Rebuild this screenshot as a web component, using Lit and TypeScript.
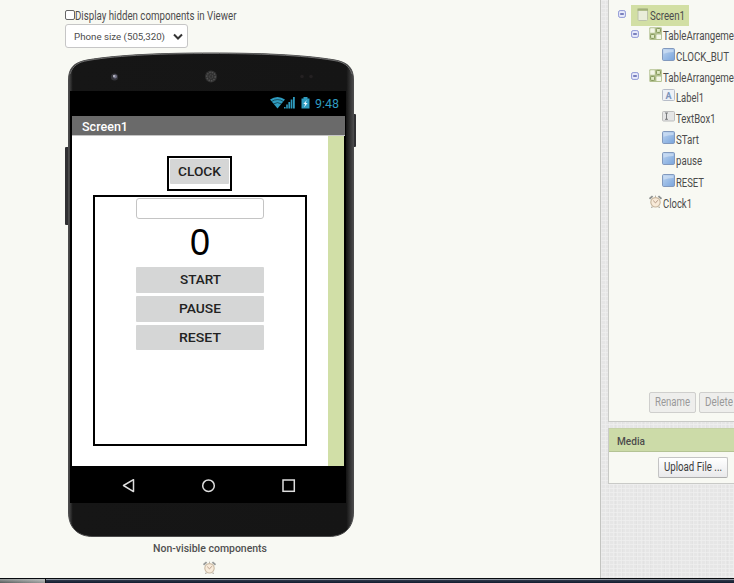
import { LitElement, html, svg, css } from "lit";
import { customElement } from "lit/decorators.js";

// One line of text fitted to a given width (condensed labels).
const line = (text: string, width: number, size: number, height: number, base: number, cls = "") => html`
  <svg class="line ${cls}" width=${width} height=${height}>
    <text x="0" y=${base} font-size=${size} textLength=${width} lengthAdjust="spacingAndGlyphs">${text}</text>
  </svg>`;

const clockArt = svg`
  <path d="M3.4 11.6L2.4 12.8M9.6 11.6L10.6 12.8" stroke="#a9a49c" stroke-width="1.2"/>
  <path d="M.5 3.8L3.6 1.1M12.5 3.8L9.4 1.1" stroke="#8f9290" stroke-width="1.9"/>
  <path d="M6.5 .6v2" stroke="#b5b0a5"/>
  <circle cx="6.5" cy="7.3" r="4.7" fill="#f8ead8" stroke="#c6b49b" stroke-width="1.1"/>
  <path d="M4.2 5.6L6.5 7.9L8.9 5.2" stroke="#b59a86" stroke-width="1" fill="none"/>`;

const art: Record<string, unknown> = {
  screen: svg`<rect x="2" y="1" width="9.5" height="11.500" rx="1" fill="#e9edda" stroke="#bcc2ab"/>
    <rect x="1.5" y=".5" width="10.5" height="2.300" fill="#a1b078"/>`,
  table: svg`<rect x=".3" y=".3" width="12.6" height="12.6" rx="1" fill="#b3c190"/>
    <rect x="1.2" y="1.2" width="4.600" height="4.600" rx=".6" fill="#f4f7e8"/>
    <rect x="7.4" y="1.4" width="4" height="4" rx="1" fill="#dfeac4" stroke="#7f9455"/>
    <rect x="1.6" y="7.4" width="4" height="4" rx="1" fill="#dfeac4" stroke="#7f9455"/>
    <rect x="7.4" y="7.4" width="4.600" height="4.600" rx=".6" fill="#f4f7e8"/>`,
  button: svg`<defs><linearGradient id="bt" x1="0" y1="0" x2="1" y2="1"><stop stop-color="#bcd4ef"/><stop offset="1" stop-color="#79a4dc"/></linearGradient></defs>
    <rect x=".5" y=".5" width="12" height="12" rx="1.2" fill="url(#bt)" stroke="#8299bd"/>
    <path d="M1.5 5.8V1.5H11.5V4Q6 4 1.5 5.8z" fill="#d3e2f4" opacity=".65"/>`,
  label: svg`<rect x=".5" y=".5" width="12" height="11" rx="1" fill="#edf1f7" stroke="#b7bdc8"/>
    <text x="6.5" y="9.5" font-size="9" text-anchor="middle" font-weight="700" fill="#7d94bb">A</text>`,
  textbox: svg`<rect x=".5" y="1.5" width="12" height="9.5" rx="1" fill="#e4e5e5" stroke="#bcbdbd"/>
    <path d="M3 3h3M4.5 3v6.3M3 9.3h3" stroke="#6e7073" stroke-width=".9"/>`,
  clock: clockArt,
};

const icon = (name: string) => html`<svg class="icon" width="13" height="13">${art[name]}</svg>`;

// x = left offset of the row; w = label width; h = row height
const tree = [
  { t: "Screen1", i: "screen", x: 9, w: 35, h: 20, box: true, sel: true },
  { t: "TableArrangeme", i: "table", x: 22, w: 71, h: 21, box: true },
  { t: "CLOCK_BUT", i: "button", x: 53, w: 53, h: 21 },
  { t: "TableArrangeme", i: "table", x: 22, w: 71, h: 20, box: true },
  { t: "Label1", i: "label", x: 53, w: 28, h: 21 },
  { t: "TextBox1", i: "textbox", x: 53, w: 39.5, h: 21 },
  { t: "STart", i: "button", x: 53, w: 23, h: 21 },
  { t: "pause", i: "button", x: 53, w: 26, h: 22 },
  { t: "RESET", i: "button", x: 53, w: 28, h: 21 },
  { t: "Clock1", i: "clock", x: 40, w: 29, h: 21 },
];

@customElement("phone-preview")
class PhonePreview extends LitElement {
  static styles = css`
    :host { display: grid; width: 292px; height: 485px; margin-left: 65px; font-family: Roboto, sans-serif; }
    .frame, .body { grid-area: 1 / 1; }
    .body { position: relative; margin: 39px 11px 34px 5px; background: #000; display: flex; flex-direction: column; }
    .line { display: block; flex: none; overflow: visible; fill: currentColor; }
    .status { height: 25px; display: flex; justify-content: flex-end; padding-right: 7px; box-sizing: border-box; color: #2f9cc0; }
    .title { height: 20px; margin: 0 1px 0 2px; padding-left: 10px; background: #6a6a6a; border-bottom: 1px solid #c5c5c5; box-sizing: border-box; color: #fff; font-weight: 500; }
    .content { height: 330px; margin: 0 2px; display: flex; background: #fff; }
    .canvas { width: 256px; display: flex; flex-direction: column; align-items: center; box-sizing: border-box; padding-top: 20px; }
    .strip { flex: 1; background: #d1dfa7; }
    .clock { width: 65px; height: 35px; border: 2px solid #000; box-sizing: border-box; padding: 1px; margin-right: 1px; }
    .clock .btn { width: 59px; height: 25px; }
    .panel { width: 214px; height: 251px; margin-top: 4px; border: 2px solid #000; box-sizing: border-box; padding-top: 1px; display: flex; flex-direction: column; align-items: center; }
    .field { width: 128px; height: 21px; border: 1px solid #c4c4c4; border-radius: 3px; box-sizing: border-box; flex: none; }
    .panel .btn { width: 128px; height: 26px; margin-bottom: 3px; flex: none; }
    .panel .btn:last-child { height: 25px; }
    .btn { background: #d5d6d6; border-radius: 1px; display: flex; justify-content: center; color: #222; font-weight: 500; }
    .zero { height: 48px; color: #000; font-family: "Liberation Sans", sans-serif; }
    .nav { flex: 1; display: flex; }
  `;
  render() {
    return html`
      <svg class="frame" width="292" height="485" viewBox="65 52 292 485">
        <defs><linearGradient id="edge"><stop stop-color="#515151"/><stop offset=".015" stop-color="#161616"/><stop offset=".975" stop-color="#151515"/><stop offset="1" stop-color="#4c4c4c"/></linearGradient></defs>
        <rect x="65" y="147" width="4" height="78" rx="1" fill="#303032"/>
        <rect x="353" y="114" width="3" height="33" rx="1" fill="#303032"/>
        <path d="M68.5 80C68.5 68 74 62.500 87 60C120 54.500 165 53 211 53S302 54.500 335 60C348 62.500 353.500 68 353.500 80V512C353.500 528 344 536.500 329 536.500H93C78 536.500 68.500 528 68.500 512Z" fill="url(#edge)" stroke="#4b4b4b"/>
        <path d="M70 74C73 65 79 62 88 60.500C120 55 165 53.500 211 53.500S302 55 334 60.500C343 62 349 65 352 74" fill="none" stroke="#6b6b6b" stroke-width="1"/>
        <circle cx="114.500" cy="77" r="3.600" fill="#34343a"/><circle cx="115" cy="76.500" r="1.900" fill="#77778c"/><circle cx="114" cy="76" r=".9" fill="#c9c9d2"/>
        <circle cx="211" cy="76.500" r="6" fill="#303030"/><circle cx="211" cy="76.500" r="4.200" fill="none" stroke="#505050" stroke-width="1.400" stroke-dasharray="1.500 1"/><circle cx="211" cy="76.500" r="1.700" fill="none" stroke="#565656" stroke-dasharray="1 1"/>
        <circle cx="302" cy="76.500" r="1.800" fill="#242122"/><circle cx="311" cy="76.500" r="1.800" fill="#242122"/>
      </svg>
      <div class="body">
        <div class="status">
          <svg width="45" height="25" viewBox="270 91 45 25" fill="#2f9cc0">
            <path d="M277.500 108.500L270 99.500Q277.500 94.500 285 99.500Z"/>
            <path d="M271.300 101.600Q277.500 97.600 283.700 101.600M273.300 104Q277.500 101.200 281.700 104" fill="none" stroke="#000" stroke-width=".5"/>
            <path d="M284 108.500v-1.500h1.600v1.500zM286.200 108.500v-4h1.600v4zM288.400 108.500v-6.500h1.700v6.500zM290.700 108.500v-9h1.700v9zM293 108.500v-11.500h1.800v11.500z"/>
            <path d="M301.500 98.500h2v-1.500h4v1.500h2v10h-8z"/>
            <path d="M306.800 100l-3.500 4h1.800l-1 3.400l3.500-4.300h-1.900z" fill="#e5f6ff"/>
          </svg>
          ${line("9:48", 24, 12.5, 25, 17)}
        </div>
        <div class="title">${line("Screen1", 46, 13, 19, 15)}</div>
        <div class="content">
          <div class="canvas">
            <div class="clock"><div class="btn">${line("CLOCK", 43, 12.8, 25, 17)}</div></div>
            <div class="panel">
              <div class="field"></div>
              <div class="zero">${line("0", 20, 36, 48, 36)}</div>
              <div class="btn">${line("START", 41, 13.5, 26, 17)}</div>
              <div class="btn">${line("PAUSE", 42, 13.5, 26, 17)}</div>
              <div class="btn">${line("RESET", 42, 13.5, 25, 17)}</div>
            </div>
          </div>
          <div class="strip"></div>
        </div>
        <div class="nav">
          <svg width="276" height="37" viewBox="70 466 276 37" fill="none" stroke="#dedede" stroke-width="1.500">
            <path d="M123.500 485.500L133.500 479.700V491.600Z" stroke-linejoin="round"/>
            <circle cx="208.500" cy="485.700" r="5.800"/>
            <rect x="283" y="480" width="11.300" height="11.300"/>
          </svg>
        </div>
      </div>`;
  }
}

@customElement("component-tree")
class ComponentTree extends LitElement {
  static styles = css`
    :host { display: block; padding-top: 5px; overflow: hidden; font-family: Roboto, sans-serif; color: #4c4c4c; }
    .row { display: flex; }
    .line { display: block; flex: none; overflow: visible; fill: currentColor; }
    .toggle { flex: none; margin: 5px 5px 0 0; }
    .icon { flex: none; margin: 2px 1px 0 0; }
    .item { display: flex; flex: none; padding-left: 5px; }
    .sel .item { background: #d2dfa4; width: 58px; height: 21px; box-sizing: border-box; margin-bottom: -1px; }
    .sel .icon { margin-top: 3px; }
    .plain .item { padding-left: 0; }
    .plain .toggle { margin-right: 10px; }
  `;
  render() {
    return tree.map((n) => html`
      <div class="row ${n.sel ? "sel" : "plain"}" style="padding-left:${n.x}px;height:${n.h}px">
        ${n.box
          ? html`<svg class="toggle" width="8" height="8"><rect x=".6" y=".6" width="6.800" height="6.800" rx="1.500" fill="#e9ecfa" stroke="#8f98d5"/><path d="M2.200 4h3.600" stroke="#3e479c" stroke-width="1.300"/></svg>`
          : ""}
        <div class="item">${icon(n.i)}${line(n.t, n.w, 12, 20, 15)}</div>
      </div>`);
  }
}

@customElement("app-root")
class AppRoot extends LitElement {
  static styles = css`
    :host { display: flex; flex-direction: column; width: 734px; height: 583px; overflow: hidden; font-family: Roboto, sans-serif; color: #4c4c4c; background: #f8f9f3; }
    .line { display: block; flex: none; overflow: visible; fill: currentColor; }
    .main { display: flex; height: 578px; overflow: hidden; }
    .viewer { width: 600px; flex: none; border-right: 1px solid #c3c4c1; }
    .check { display: flex; align-items: flex-start; height: 24px; padding-left: 65px; }
    .tick { width: 10px; height: 10px; margin: 10px 0 0; border: 1px solid #666; border-radius: 2px; box-sizing: border-box; background: #fff; }
    .select { display: flex; width: 123px; height: 24px; margin: 0 0 4px 65px; border: 1px solid #c6c6c6; border-radius: 3px; box-sizing: border-box; background: #fff; padding-left: 8px; }
    .chev { margin: 8px 0 0 8px; }
    .hidden { display: flex; flex-direction: column; align-items: center; width: 290px; margin-left: 65px; font-weight: 500; color: #505050; }
    .hidden .icon { margin: 3px 1px 0 0; opacity: .9; }
    .side { flex: 1; min-width: 0; padding-left: 7px; background-color: #e6e6e6;
      background-image: linear-gradient(90deg, #f1f1f180 1px, transparent 1px), linear-gradient(#f2f2f299 1px, transparent 1px), linear-gradient(90deg, #dcdcdc66 1px, transparent 1px);
      background-size: 4px 4px, 4px 4px, 7px 7px; }
    .card { background: #f8f9f3; border-left: 1px solid #c9cac7; border-bottom: 1px solid #c9cac7; box-sizing: border-box; overflow: hidden; }
    .components { height: 422px; display: flex; flex-direction: column; }
    component-tree { flex: 1; }
    .actions { display: flex; gap: 3px; height: 29px; padding-left: 40px; }
    .key { height: 21px; box-sizing: border-box; border: 1px solid #cfcfcd; border-radius: 2px; background: #eeeeec; color: #999; display: flex; justify-content: center; flex: none; }
    .rename { width: 47px; }
    .delete { width: 42px; justify-content: flex-start; padding-left: 5px; }
    .media { height: 56px; margin-top: 6px; }
    .head { height: 24px; box-sizing: border-box; background: #ccdba8; border-bottom: 1px solid #b4c394; padding-left: 8px; font-weight: 500; border-top: 1px solid #c6d2a8; }
    .upload { width: 70px; height: 21px; margin: 5px 0 0 49px; color: #3c3c3c; border-color: #c4c4c4 #c4c4c4 #adadad; background: linear-gradient(#fff, #e9e9eb); }
    .task { display: flex; height: 5px; border-top: 1px solid #080b0e; box-sizing: border-box; }
    .start { width: 45px; background: linear-gradient(#dce0df80, #5b606030), linear-gradient(90deg, #555a59, #a2a5a4); border-right: 1px solid #111; }
    .bar { flex: 1; background: linear-gradient(#8b919c 0 1px, #30394a 1px, #101b2e); }
  `;
  render() {
    return html`
      <div class="main">
        <div class="viewer">
          <div class="check"><div class="tick"></div>${line("Display hidden components in Viewer", 161.5, 12, 24, 20)}</div>
          <div class="select">${line("Phone size (505,320)", 91, 9.8, 22, 15)}
            <svg class="chev" width="10" height="8"><path d="M1 1.500L5 5.500L9 1.500" fill="none" stroke="#333" stroke-width="2"/></svg>
          </div>
          <phone-preview></phone-preview>
          <div class="hidden">${line("Non-visible components", 114, 11.5, 21, 15)}
            <svg class="icon" width="13" height="13">${clockArt}</svg>
          </div>
        </div>
        <div class="side">
          <div class="card components">
            <component-tree></component-tree>
            <div class="actions">
              <div class="key rename">${line("Rename", 35, 12, 19, 13)}</div>
              <div class="key delete">${line("Delete", 28, 12, 19, 13)}</div>
            </div>
          </div>
          <div class="card media">
            <div class="head">${line("Media", 28, 11.5, 23, 16)}</div>
            <div class="key upload">${line("Upload File ...", 58, 12, 19, 13)}</div>
          </div>
        </div>
      </div>
      <div class="task"><div class="start"></div><div class="bar"></div></div>`;
  }
}
